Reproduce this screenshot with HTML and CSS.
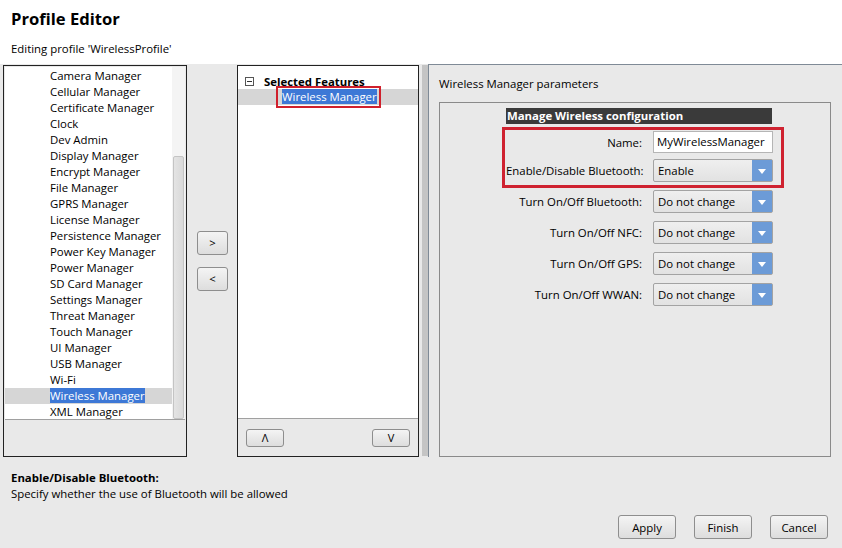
FILE: index.html
```html
<!DOCTYPE html>
<html lang="en">
<head>
    <meta charset="UTF-8">
    <title>Profile Editor</title>
    <link rel="stylesheet" href="styles.css">
</head>
<body>
    <div class="header">
        <h1>Profile Editor</h1>
        <p>Editing profile 'WirelessProfile'</p>
    </div>

    <div class="main">
        <div class="features-panel">
            <div class="feature-list">
                <ul class="items">
                    <li>Camera Manager</li>
                    <li>Cellular Manager</li>
                    <li>Certificate Manager</li>
                    <li>Clock</li>
                    <li>Dev Admin</li>
                    <li>Display Manager</li>
                    <li>Encrypt Manager</li>
                    <li>File Manager</li>
                    <li>GPRS Manager</li>
                    <li>License Manager</li>
                    <li>Persistence Manager</li>
                    <li>Power Key Manager</li>
                    <li>Power Manager</li>
                    <li>SD Card Manager</li>
                    <li>Settings Manager</li>
                    <li>Threat Manager</li>
                    <li>Touch Manager</li>
                    <li>UI Manager</li>
                    <li>USB Manager</li>
                    <li>Wi-Fi</li>
                    <li class="selected"><span>Wireless Manager</span></li>
                    <li>XML Manager</li>
                </ul>
                <div class="scrollbar"><div class="thumb"></div></div>
            </div>
        </div>

        <div class="move-buttons">
            <button class="btn small">&gt;</button>
            <button class="btn small">&lt;</button>
        </div>

        <div class="selected-panel">
            <div class="tree">
                <div class="tree-root">
                    <span class="toggle"></span>
                    <b>Selected Features</b>
                </div>
                <div class="tree-item">
                    <span class="marked"><span>Wireless Manager</span></span>
                </div>
            </div>
            <div class="order-buttons">
                <button class="btn order">&#923;</button>
                <button class="btn order">V</button>
            </div>
        </div>

        <div class="splitter"></div>

        <div class="params-panel">
            <div class="params-title">Wireless Manager parameters</div>
            <div class="group">
                <div class="form">
                    <div class="form-head">Manage Wireless configuration</div>
                    <div class="marked-box">
                        <div class="row name-row">
                            <label>Name:</label>
                            <div class="field text-field">MyWirelessManager</div>
                        </div>
                        <div class="row">
                            <label>Enable/Disable Bluetooth:</label>
                            <div class="field select">Enable<span class="arrow"></span></div>
                        </div>
                    </div>
                    <div class="row">
                        <label>Turn On/Off Bluetooth:</label>
                        <div class="field select">Do not change<span class="arrow"></span></div>
                    </div>
                    <div class="row">
                        <label>Turn On/Off NFC:</label>
                        <div class="field select">Do not change<span class="arrow"></span></div>
                    </div>
                    <div class="row">
                        <label>Turn On/Off GPS:</label>
                        <div class="field select">Do not change<span class="arrow"></span></div>
                    </div>
                    <div class="row">
                        <label>Turn On/Off WWAN:</label>
                        <div class="field select">Do not change<span class="arrow"></span></div>
                    </div>
                </div>
            </div>
        </div>
    </div>

    <div class="help">
        <b>Enable/Disable Bluetooth:</b>
        <div>Specify whether the use of Bluetooth will be allowed</div>
    </div>

    <div class="footer">
        <button class="btn wide">Apply</button>
        <button class="btn wide">Finish</button>
        <button class="btn wide">Cancel</button>
    </div>
</body>
</html>
```

FILE: styles.css
```css
body {
    margin: 0;
    background-color: #e9e9e9;
    color: #000;
    font-family: "Open Sans", "Noto Sans", sans-serif;
    font-size: 11.4px;
    width: 842px;
    height: 548px;
    overflow: hidden;
}

.header {
    background-color: #fff;
    height: 64px;
    padding-left: 11px;
    box-sizing: border-box;
    overflow: hidden;
}

.header h1 {
    margin: 0;
    padding-top: 7px;
    font-size: 16.6px;
    line-height: 24px;
}

.header p {
    margin: 0;
    padding-top: 10px;
    line-height: 16px;
}

.main {
    display: flex;
    height: 393px;
    padding-left: 3px;
}

/* left list */
.features-panel {
    width: 184px;
    height: 392px;
    margin-top: 1px;
    border: 1px solid #222;
    box-sizing: border-box;
    padding: 1px 1px 0 1px;
}

.feature-list {
    display: flex;
    height: 352px;
    background-color: #fff;
    border-bottom: 1px solid #a0a0a0;
}

.items {
    list-style: none;
    margin: 0;
    padding: 1px 0 0 0;
    flex: 1;
}

.items li {
    line-height: 16px;
    height: 16px;
    padding-left: 45px;
    white-space: nowrap;
}

.items li.selected {
    background-color: #d6d6d6;
}

.items li.selected span,
.marked span {
    background-color: #3d78d6;
    color: #fff;
}

.scrollbar {
    width: 13px;
    position: relative;
    background-color: #f4f4f4;
}

.thumb {
    position: absolute;
    left: 1px;
    right: 1px;
    top: 89px;
    bottom: 0;
    background: linear-gradient(to right, #e4e4e4, #d9d9d9);
    border: 1px solid #c4c4c4;
    border-radius: 2px;
}

/* > < */
.move-buttons {
    width: 50px;
    display: flex;
    flex-direction: column;
    justify-content: center;
    align-items: center;
    gap: 12px;
    padding-left: 1px;
    box-sizing: border-box;
}

.btn {
    font-family: inherit;
    font-size: 11.4px;
    color: #000;
    background: linear-gradient(#f4f4f4, #dddddd);
    border: 1px solid #8e8e8e;
    border-radius: 3px;
    padding: 0;
}

.btn.small {
    width: 31px;
    height: 24px;
}

/* selected features */
.selected-panel {
    width: 182px;
    height: 392px;
    margin-top: 1px;
    border: 1px solid #222;
    box-sizing: border-box;
    display: flex;
    flex-direction: column;
}

.tree {
    height: 353px;
    background-color: #fff;
    border-bottom: 1px solid #a0a0a0;
    padding-top: 7px;
    box-sizing: border-box;
}

.tree-root {
    display: flex;
    align-items: center;
    height: 16px;
    padding-left: 7px;
}

.toggle {
    width: 7px;
    height: 7px;
    border: 1px solid #555;
    margin-right: 10px;
    position: relative;
}

.toggle::after {
    content: "";
    position: absolute;
    left: 1px;
    right: 1px;
    top: 3px;
    height: 1px;
    background-color: #333;
}

.tree-item {
    height: 16px;
    line-height: 16px;
    background-color: #d6d6d6;
    padding-left: 41px;
}

.marked {
    display: inline-block;
    outline: 2px solid #d0202c;
    outline-offset: 1px;
    padding: 0 1px 0 3px;
    line-height: 16px;
}

.order-buttons {
    display: flex;
    justify-content: space-between;
    padding: 10px 8px 0 8px;
}

.btn.order {
    width: 38px;
    height: 18px;
    font-size: 11px;
    line-height: 16px;
}

.splitter {
    width: 6px;
    margin: 1px 0 0 3px;
    height: 391px;
    background-image: radial-gradient(#9a9a9a 0.6px, transparent 0.8px);
    background-size: 2px 2px;
}

/* parameters */
.params-panel {
    flex: 1;
    border-top: 1px solid #7f8a96;
    border-left: 1px solid #7f8a96;
    padding: 11px 0 0 10px;
}

.params-title {
    line-height: 16px;
}

.group {
    margin-top: 10px;
    width: 392px;
    height: 355px;
    border: 1px solid #8a8a8a;
    box-sizing: border-box;
    padding: 5px 0 0 66px;
}

.form-head {
    width: 266px;
    height: 16px;
    line-height: 16px;
    background-color: #3a3a3a;
    color: #fff;
    font-weight: bold;
    padding-left: 1px;
    box-sizing: border-box;
}

.marked-box {
    display: inline-flex;
    flex-direction: column;
    gap: 6px;
    margin: 3px 0 2px -4px;
    border: 3px solid #cf2230;
    padding: 1px 8px 3px 1px;
}

.form > .row {
    margin-bottom: 8px;
}

.row {
    display: flex;
    align-items: center;
    gap: 11px;
}

.row label {
    width: 136px;
    text-align: right;
    white-space: nowrap;
}

.field {
    width: 120px;
    height: 23px;
    box-sizing: border-box;
    border: 1px solid #a3a3a3;
    line-height: 21px;
    padding-left: 4px;
    position: relative;
}

.text-field {
    height: 22px;
    line-height: 20px;
    background-color: #fff;
    border-color: #b5b5b5;
    padding-left: 3px;
    white-space: nowrap;
    overflow: hidden;
}

.select {
    background: linear-gradient(#efefef, #e2e2e2);
    border-radius: 2px;
}

.arrow {
    position: absolute;
    right: 0;
    top: 0;
    bottom: 0;
    width: 20px;
    background-color: #6c9bd7;
}

.arrow::after {
    content: "";
    position: absolute;
    left: 6px;
    top: 9px;
    border-left: 4px solid transparent;
    border-right: 4px solid transparent;
    border-top: 5px solid #fff;
}

/* help + footer */
.help {
    padding: 13px 0 0 11px;
    line-height: 16px;
}

.footer {
    display: flex;
    justify-content: flex-end;
    gap: 18px;
    padding: 13px 14px 0 0;
}

.btn.wide {
    width: 58px;
    height: 24px;
}
```
